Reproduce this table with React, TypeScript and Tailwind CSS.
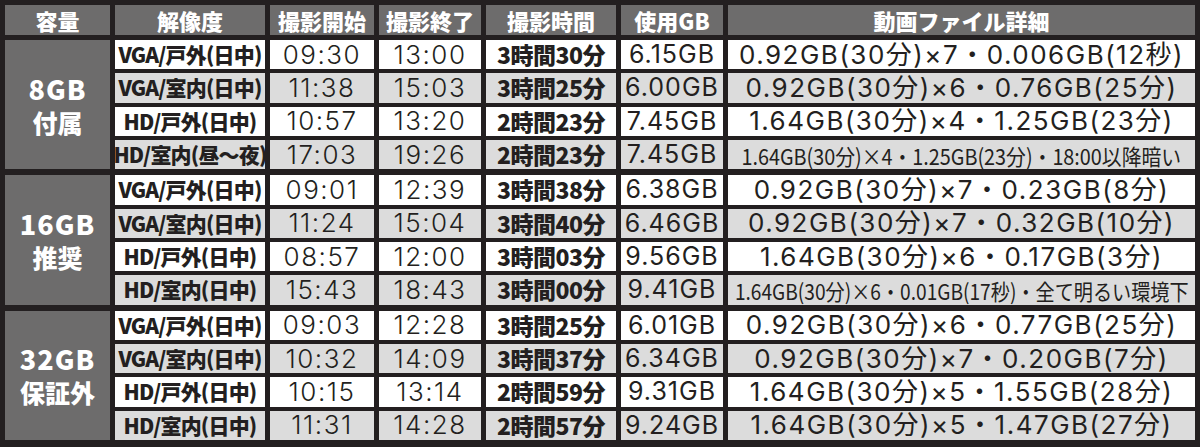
import React from 'react';

type Row = {
  mode: string;
  start: string;
  end: string;
  duration: string;
  used: string;
  detail: string;
  small?: string;
};

type Group = {
  size: string;
  note: string;
  rows: Row[];
};

const groups: Group[] = [
  {
    size: '8GB',
    note: '付属',
    rows: [
      { mode: 'VGA/戸外(日中)', start: '09:30', end: '13:00', duration: '3時間30分', used: '6.15GB', detail: '0.92GB(30分)×7・0.006GB(12秒)' },
      { mode: 'VGA/室内(日中)', start: '11:38', end: '15:03', duration: '3時間25分', used: '6.00GB', detail: '0.92GB(30分)×6・0.76GB(25分)' },
      { mode: 'HD/戸外(日中)', start: '10:57', end: '13:20', duration: '2時間23分', used: '7.45GB', detail: '1.64GB(30分)×4・1.25GB(23分)' },
      { mode: 'HD/室内(昼～夜)', start: '17:03', end: '19:26', duration: '2時間23分', used: '7.45GB', detail: '1.64GB(30分)×4・1.25GB(23分)・18:00以降暗い', small: 'scale-x-[0.9]' },
    ],
  },
  {
    size: '16GB',
    note: '推奨',
    rows: [
      { mode: 'VGA/戸外(日中)', start: '09:01', end: '12:39', duration: '3時間38分', used: '6.38GB', detail: '0.92GB(30分)×7・0.23GB(8分)' },
      { mode: 'VGA/室内(日中)', start: '11:24', end: '15:04', duration: '3時間40分', used: '6.46GB', detail: '0.92GB(30分)×7・0.32GB(10分)' },
      { mode: 'HD/戸外(日中)', start: '08:57', end: '12:00', duration: '3時間03分', used: '9.56GB', detail: '1.64GB(30分)×6・0.17GB(3分)' },
      { mode: 'HD/室内(日中)', start: '15:43', end: '18:43', duration: '3時間00分', used: '9.41GB', detail: '1.64GB(30分)×6・0.01GB(17秒)・全て明るい環境下', small: 'scale-x-[0.87]' },
    ],
  },
  {
    size: '32GB',
    note: '保証外',
    rows: [
      { mode: 'VGA/戸外(日中)', start: '09:03', end: '12:28', duration: '3時間25分', used: '6.01GB', detail: '0.92GB(30分)×6・0.77GB(25分)' },
      { mode: 'VGA/室内(日中)', start: '10:32', end: '14:09', duration: '3時間37分', used: '6.34GB', detail: '0.92GB(30分)×7・0.20GB(7分)' },
      { mode: 'HD/戸外(日中)', start: '10:15', end: '13:14', duration: '2時間59分', used: '9.31GB', detail: '1.64GB(30分)×5・1.55GB(28分)' },
      { mode: 'HD/室内(日中)', start: '11:31', end: '14:28', duration: '2時間57分', used: '9.24GB', detail: '1.64GB(30分)×5・1.47GB(27分)' },
    ],
  },
];

const headers = ['容量', '解像度', '撮影開始', '撮影終了', '撮影時間', '使用GB', '動画ファイル詳細'];

const cols = 'grid grid-cols-[105px_150px_104px_102px_130px_102px_minmax(0,1fr)] gap-x-[5px]';
const jp = "font-['Noto_Sans_CJK_JP',sans-serif]";
const num = "font-['Inter','Noto_Sans_CJK_JP',sans-serif]";

function DataRow({ row, shaded }: { row: Row; shaded: boolean }) {
  const bg = shaded ? 'bg-[#dcdcdc]' : 'bg-white';
  const cell = `${bg} min-h-0 min-w-0 flex items-center justify-center whitespace-nowrap text-[#231f20] leading-none`;

  return (
    <>
      <div className={`${cell} ${jp} text-[21px] font-black tracking-[-0.8px]`}>{row.mode}</div>
      <div className={`${cell} ${num} text-[26px] font-light tracking-[1.5px]`}>{row.start}</div>
      <div className={`${cell} ${num} text-[26px] font-light tracking-[1.5px]`}>{row.end}</div>
      <div className={`${cell} ${jp} text-[23px] font-black tracking-[-0.5px]`}>{row.duration}</div>
      <div className={`${cell} ${num} text-[25px] font-normal tracking-[1px]`}>{row.used}</div>
      {row.small ? (
        <div className={`${cell} ${jp} text-[22px] font-normal`}>
          <span className={`inline-block shrink-0 ${row.small}`}>{row.detail}</span>
        </div>
      ) : (
        <div className={`${cell} ${num} text-[26px] font-normal tracking-[1.5px]`}>{row.detail}</div>
      )}
    </>
  );
}

export default function App() {
  return (
    <div className="w-[1200px] h-[447px] overflow-hidden bg-[#231f20] px-[5px] pt-[5px] pb-[7px] flex flex-col gap-y-[6px]">
      <div className={`${cols} h-[30px] shrink-0 mb-[-1px]`}>
        {headers.map((h) => (
          <div
            key={h}
            className={`bg-[#6d6c6c] flex items-center justify-center text-white text-[22px] font-black leading-none ${jp}`}
          >
            {h}
          </div>
        ))}
      </div>

      {groups.map((g) => (
        <div key={g.size} className={`${cols} grid-rows-4 gap-y-[4px] flex-1 min-h-0`}>
          <div
            className={`row-span-4 bg-[#6d6c6c] flex flex-col items-center justify-center gap-y-[8px] text-white font-black leading-none ${jp}`}
          >
            <span className="text-[27px] tracking-[1px]">{g.size}</span>
            <span className="text-[25px]">{g.note}</span>
          </div>
          {g.rows.map((r, i) => (
            <DataRow key={i} row={r} shaded={i % 2 === 1} />
          ))}
        </div>
      ))}
    </div>
  );
}
